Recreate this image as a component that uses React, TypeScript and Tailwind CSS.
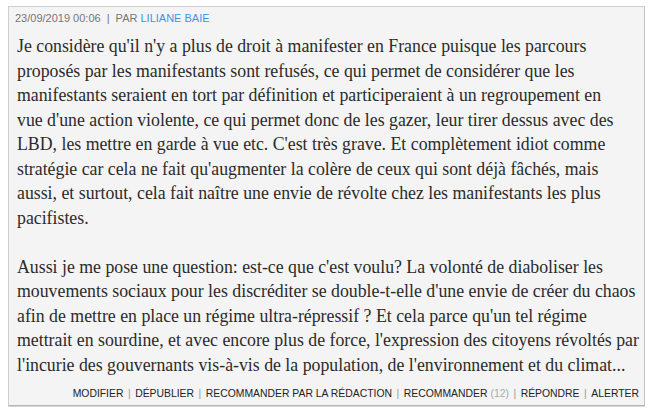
import React from "react";

const para1 = [
  "Je considère qu'il n'y a plus de droit à manifester en France puisque les parcours",
  "proposés par les manifestants sont refusés, ce qui permet de considérer que les",
  "manifestants seraient en tort par définition et participeraient à un regroupement en",
  "vue d'une action violente, ce qui permet donc de les gazer, leur tirer dessus avec des",
  "LBD, les mettre en garde à vue etc. C'est très grave. Et complètement idiot comme",
  "stratégie car cela ne fait qu'augmenter la colère de ceux qui sont déjà fâchés, mais",
  "aussi, et surtout, cela fait naître une envie de révolte chez les manifestants les plus",
  "pacifistes.",
];
const para2 = [
  "Aussi je me pose une question: est-ce que c'est voulu? La volonté de diaboliser les",
  "mouvements sociaux pour les discréditer se double-t-elle d'une envie de créer du chaos",
  "afin de mettre en place un régime ultra-répressif ? Et cela parce qu'un tel régime",
  "mettrait en sourdine, et avec encore plus de force, l'expression des citoyens révoltés par",
  "l'incurie des gouvernants vis-à-vis de la population, de l'environnement et du climat...",
];

const actions = ["MODIFIER", "DÉPUBLIER", "RECOMMANDER PAR LA RÉDACTION", "RECOMMANDER", "RÉPONDRE", "ALERTER"];

export default function App() {
  return (
    <div className="w-[661px] h-[416px] bg-white pt-[6px] pl-[8px]">
      <div className="w-[637px] h-[400px] bg-[#f4f4f4] border border-[#cfcfcf] border-b-[#b5b5b5] border-r-[#c4c4c4] shadow-[0_1px_0_#d8d8d8] flex flex-col">
        <div className="pl-[6px] pt-[5px] text-[11px] leading-[13px] text-[#777] font-['Liberation_Sans',Arial,sans-serif]">
          23/09/2019 00:06 <span className="mx-[3px]">|</span> PAR <span className="text-[#3a96e6]">LILIANE BAIE</span>
        </div>
        <div className="pl-[8px] pt-[9px] text-[17.8px] leading-[24.5px] text-[#2b2b2b] font-['Liberation_Serif','Times_New_Roman',serif]">
          {para1.map((l, i) => (
            <div key={i} className="whitespace-nowrap">{l}</div>
          ))}
          <div className="h-[24.5px]" />
          {para2.map((l, i) => (
            <div key={i} className="whitespace-nowrap">{l}</div>
          ))}
        </div>
        <div className="mt-auto pb-[5px] pr-[5px] flex justify-end text-[10.4px] leading-[13px] text-[#222] font-['Liberation_Sans',Arial,sans-serif]">
          {actions.map((a, i) => (
            <span key={i} className="flex">
              {i > 0 && <span className="mx-[4.5px] text-[#999]">|</span>}
              <span>{a}</span>
              {a === "RECOMMANDER" && <span className="ml-[3px] text-[#aaa]">(12)</span>}
            </span>
          ))}
        </div>
      </div>
    </div>
  );
}
